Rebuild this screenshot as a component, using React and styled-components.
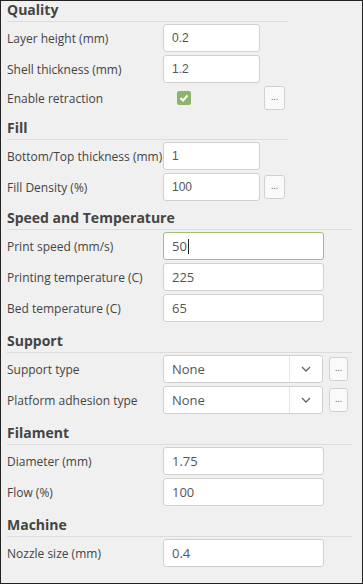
import React from "react";
import styled, { createGlobalStyle } from "styled-components";

const GlobalStyle = createGlobalStyle`
  html, body {
    margin: 0;
    padding: 0;
    background: #f0f0f0;
  }
  * {
    box-sizing: border-box;
  }
`;

const StyledPanel = styled.main`
  width: 363px;
  height: 584px;
  border: 1px solid #222;
  background: #f0f0f0;
  padding: 0 6px;
  font-family: "Open Sans", sans-serif;
  color: #444;
  overflow: hidden;
`;

const StyledSection = styled.section`
  width: ${(p) => p.$width}px;
  margin-top: ${(p) => p.$gap}px;
`;

const StyledHeader = styled.h2`
  margin: 0;
  font-size: 14px;
  font-weight: 700;
  line-height: 18px;
  padding-bottom: 2px;
  border-bottom: 1px solid #dcdcdc;
  color: #444;
`;

const StyledRows = styled.div`
  display: flex;
  flex-direction: column;
  gap: 3px;
  margin-top: 2px;
`;

const StyledRow = styled.div`
  display: flex;
  align-items: center;
  height: ${(p) => p.$height || 28}px;
`;

const StyledLabel = styled.label`
  width: 156px;
  flex-shrink: 0;
  font-size: 12px;
  white-space: nowrap;
  color: #444;
`;

const StyledInput = styled.div`
  width: ${(p) => p.$width}px;
  height: 28px;
  display: flex;
  align-items: center;
  padding-left: 8px;
  background: #fff;
  border: 1px solid ${(p) => (p.$focused ? "#9cc27a" : "#d0d0d0")};
  border-radius: 3px;
  font-family: ${(p) =>
    p.$plain ? '"Liberation Sans", Arial, sans-serif' : '"Open Sans", sans-serif'};
  font-size: ${(p) => (p.$plain ? 12 : 13)}px;
  color: #555;
`;

const StyledCaret = styled.span`
  display: inline-block;
  width: 1px;
  height: 15px;
  background: #222;
  margin-left: 1px;
`;

const StyledCheckCell = styled.div`
  width: ${(p) => p.$width}px;
  padding-left: 14px;
  display: flex;
  align-items: center;
`;

const StyledCheckbox = styled.span`
  width: 14px;
  height: 14px;
  border-radius: 2px;
  background: #8db46b;
  display: flex;
  align-items: center;
  justify-content: center;
`;

const StyledSelect = styled.div`
  width: ${(p) => p.$width}px;
  height: 28px;
  display: flex;
  background: #fff;
  border: 1px solid #d0d0d0;
  border-radius: 3px;
  font-size: 13px;
  color: #555;
`;

const StyledSelectValue = styled.span`
  flex: 1;
  display: flex;
  align-items: center;
  padding-left: 8px;
`;

const StyledSelectArrow = styled.span`
  width: 33px;
  border-left: 1px solid #e6e6e6;
  display: flex;
  align-items: center;
  justify-content: center;
`;

const StyledMoreButton = styled.button`
  width: ${(p) => p.$width}px;
  height: 24px;
  margin-left: ${(p) => p.$offset}px;
  padding: 0 0 4px;
  display: flex;
  align-items: center;
  justify-content: center;
  background: #fafafa;
  border: 1px solid #d0d0d0;
  border-radius: 3px;
  font-family: "Open Sans", sans-serif;
  font-size: 9px;
  line-height: 9px;
  color: #555;
`;

const Chevron = () => (
  <svg width="10" height="6" viewBox="0 0 10 6">
    <polyline points="1,1 5,5 9,1" fill="none" stroke="#666" strokeWidth="1.3" />
  </svg>
);

const Check = () => (
  <svg width="10" height="8" viewBox="0 0 10 8">
    <polyline points="1.5,4 4,6.5 8.5,1.5" fill="none" stroke="#fff" strokeWidth="2" />
  </svg>
);

const App = () => {
  return (
    <>
      <GlobalStyle />
      <StyledPanel>
        <StyledSection $width={281} $gap={0}>
          <StyledHeader>Quality</StyledHeader>
          <StyledRows>
            <StyledRow>
              <StyledLabel>Layer height (mm)</StyledLabel>
              <StyledInput $width={97} $plain>0.2</StyledInput>
            </StyledRow>
            <StyledRow>
              <StyledLabel>Shell thickness (mm)</StyledLabel>
              <StyledInput $width={97} $plain>1.2</StyledInput>
            </StyledRow>
            <StyledRow $height={24}>
              <StyledLabel>Enable retraction</StyledLabel>
              <StyledCheckCell $width={97}>
                <StyledCheckbox>
                  <Check />
                </StyledCheckbox>
              </StyledCheckCell>
              <StyledMoreButton $width={21} $offset={4}>...</StyledMoreButton>
            </StyledRow>
          </StyledRows>
        </StyledSection>

        <StyledSection $width={281} $gap={9}>
          <StyledHeader>Fill</StyledHeader>
          <StyledRows>
            <StyledRow>
              <StyledLabel>Bottom/Top thickness (mm)</StyledLabel>
              <StyledInput $width={97} $plain>1</StyledInput>
            </StyledRow>
            <StyledRow>
              <StyledLabel>Fill Density (%)</StyledLabel>
              <StyledInput $width={97} $plain>100</StyledInput>
              <StyledMoreButton $width={21} $offset={4}>...</StyledMoreButton>
            </StyledRow>
          </StyledRows>
        </StyledSection>

        <StyledSection $width={345} $gap={8}>
          <StyledHeader>Speed and Temperature</StyledHeader>
          <StyledRows>
            <StyledRow>
              <StyledLabel>Print speed (mm/s)</StyledLabel>
              <StyledInput $width={161} $focused>
                50
                <StyledCaret />
              </StyledInput>
            </StyledRow>
            <StyledRow>
              <StyledLabel>Printing temperature (C)</StyledLabel>
              <StyledInput $width={161}>225</StyledInput>
            </StyledRow>
            <StyledRow>
              <StyledLabel>Bed temperature (C)</StyledLabel>
              <StyledInput $width={161}>65</StyledInput>
            </StyledRow>
          </StyledRows>
        </StyledSection>

        <StyledSection $width={345} $gap={10}>
          <StyledHeader>Support</StyledHeader>
          <StyledRows>
            <StyledRow>
              <StyledLabel>Support type</StyledLabel>
              <StyledSelect $width={160}>
                <StyledSelectValue>None</StyledSelectValue>
                <StyledSelectArrow>
                  <Chevron />
                </StyledSelectArrow>
              </StyledSelect>
              <StyledMoreButton $width={19} $offset={6}>...</StyledMoreButton>
            </StyledRow>
            <StyledRow>
              <StyledLabel>Platform adhesion type</StyledLabel>
              <StyledSelect $width={160}>
                <StyledSelectValue>None</StyledSelectValue>
                <StyledSelectArrow>
                  <Chevron />
                </StyledSelectArrow>
              </StyledSelect>
              <StyledMoreButton $width={19} $offset={6}>...</StyledMoreButton>
            </StyledRow>
          </StyledRows>
        </StyledSection>

        <StyledSection $width={345} $gap={10}>
          <StyledHeader>Filament</StyledHeader>
          <StyledRows>
            <StyledRow>
              <StyledLabel>Diameter (mm)</StyledLabel>
              <StyledInput $width={161}>1.75</StyledInput>
            </StyledRow>
            <StyledRow>
              <StyledLabel>Flow (%)</StyledLabel>
              <StyledInput $width={161}>100</StyledInput>
            </StyledRow>
          </StyledRows>
        </StyledSection>

        <StyledSection $width={345} $gap={10}>
          <StyledHeader>Machine</StyledHeader>
          <StyledRows>
            <StyledRow>
              <StyledLabel>Nozzle size (mm)</StyledLabel>
              <StyledInput $width={161}>0.4</StyledInput>
            </StyledRow>
          </StyledRows>
        </StyledSection>
      </StyledPanel>
    </>
  );
};

export default App;
